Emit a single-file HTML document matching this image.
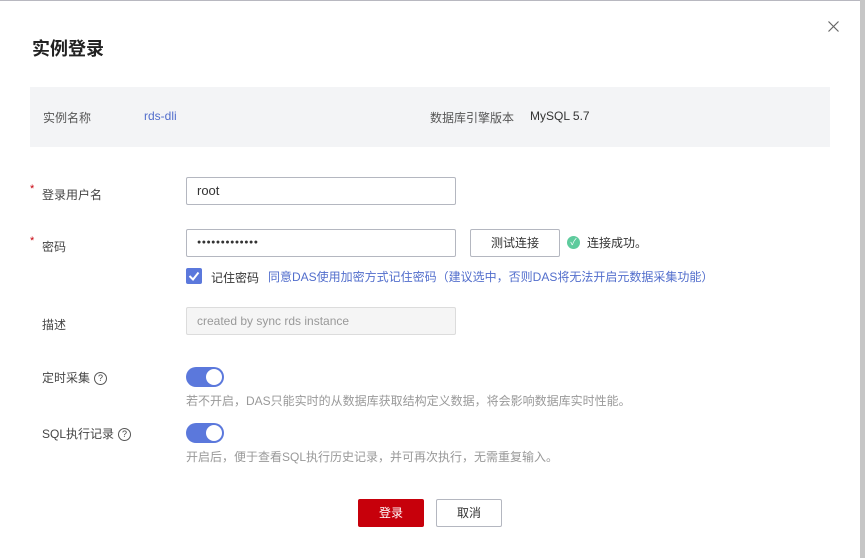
<!DOCTYPE html>
<html><head><meta charset="utf-8"><style>
*{box-sizing:border-box;margin:0;padding:0}
body{width:865px;height:558px;background:#fff;position:relative;overflow:hidden;font-family:"Liberation Sans","Noto Sans CJK SC",sans-serif;font-size:12px;color:#333}
.a{position:absolute;white-space:nowrap}
.inp{position:absolute;border:1px solid #b4b7c0;border-radius:2px;height:28px;padding-left:10px;line-height:26px;font-size:13px}
.tog{position:absolute;width:38px;height:20px;border-radius:10px;background:#5b78dc}
.tog:after{content:"";position:absolute;right:2px;top:2px;width:16px;height:16px;border-radius:50%;background:#fff}
.q{display:inline-block;width:13px;height:13px;border:1px solid #555;border-radius:50%;font-size:9px;line-height:11px;text-align:center;margin-left:4px;vertical-align:middle}
.star{color:#c7000b;font-size:11px}
</style></head><body>
<div class="a" style="left:0;top:0;width:865px;height:1px;background:#b8b8c0"></div>
<div class="a" style="left:860px;top:0;width:5px;height:558px;background:#c6c6c6"></div>
<svg class="a" style="left:828px;top:21px" width="11" height="11" viewBox="0 0 11 11"><path d="M0.5 0.5L10.5 10.5M10.5 0.5L0.5 10.5" stroke="#666" stroke-width="1.2"/></svg>
<div class="a" style="left:32px;top:35px;font-size:18px;font-weight:bold;color:#222">实例登录</div>
<div class="a" style="left:30px;top:87px;width:800px;height:60px;background:#f3f4f6"></div>
<div class="a" style="left:43px;top:109px;color:#555">实例名称</div>
<div class="a" style="left:144px;top:109px;color:#526ecc">rds-dli</div>
<div class="a" style="left:430px;top:109px;color:#555">数据库引擎版本</div>
<div class="a" style="left:530px;top:109px;color:#333">MySQL 5.7</div>

<div class="a star" style="left:30px;top:183px">*</div>
<div class="a" style="left:42px;top:186px;color:#444">登录用户名</div>
<div class="inp" style="left:186px;top:177px;width:270px">root</div>

<div class="a star" style="left:30px;top:235px">*</div>
<div class="a" style="left:42px;top:238px;color:#444">密码</div>
<div class="inp" style="left:186px;top:229px;width:270px;font-size:7px;letter-spacing:0.5px">●●●●●●●●●●●●●</div>
<div class="inp" style="left:470px;top:229px;width:90px;padding:0;text-align:center;font-size:12px">测试连接</div>
<div class="a" style="left:567px;top:236px;width:13px;height:13px;border-radius:50%;background:#5ecb9d;color:#fff;font-size:9px;line-height:13px;text-align:center">✓</div>
<div class="a" style="left:587px;top:234px;color:#333">连接成功。</div>

<div class="a" style="left:186px;top:268px;width:16px;height:16px;background:#5b78dc;border-radius:2px"><svg width="16" height="16"><path d="M3.5 8L7 11.5L12.5 4.5" stroke="#fff" stroke-width="2" fill="none"/></svg></div>
<div class="a" style="left:211px;top:269px;color:#333">记住密码</div>
<div class="a" style="left:268px;top:268px;color:#526ecc">同意DAS使用加密方式记住密码（建议选中，否则DAS将无法开启元数据采集功能）</div>

<div class="a" style="left:42px;top:316px;color:#444">描述</div>
<div class="inp" style="left:186px;top:307px;width:270px;background:#f5f5f5;border-color:#dcdcdc;color:#999;font-size:12px">created by sync rds instance</div>

<div class="a" style="left:42px;top:369px;color:#444">定时采集<span class="q">?</span></div>
<div class="tog" style="left:186px;top:367px"></div>
<div class="a" style="left:186px;top:392px;color:#999">若不开启，DAS只能实时的从数据库获取结构定义数据，将会影响数据库实时性能。</div>

<div class="a" style="left:42px;top:425px;color:#444">SQL执行记录<span class="q">?</span></div>
<div class="tog" style="left:186px;top:423px"></div>
<div class="a" style="left:186px;top:448px;color:#999">开启后，便于查看SQL执行历史记录，并可再次执行，无需重复输入。</div>

<div class="a" style="left:358px;top:499px;width:66px;height:28px;background:#c7000b;border-radius:2px;color:#fff;text-align:center;line-height:28px">登录</div>
<div class="a" style="left:436px;top:499px;width:66px;height:28px;border:1px solid #b4b7c0;border-radius:2px;text-align:center;line-height:26px">取消</div>
</body></html>
